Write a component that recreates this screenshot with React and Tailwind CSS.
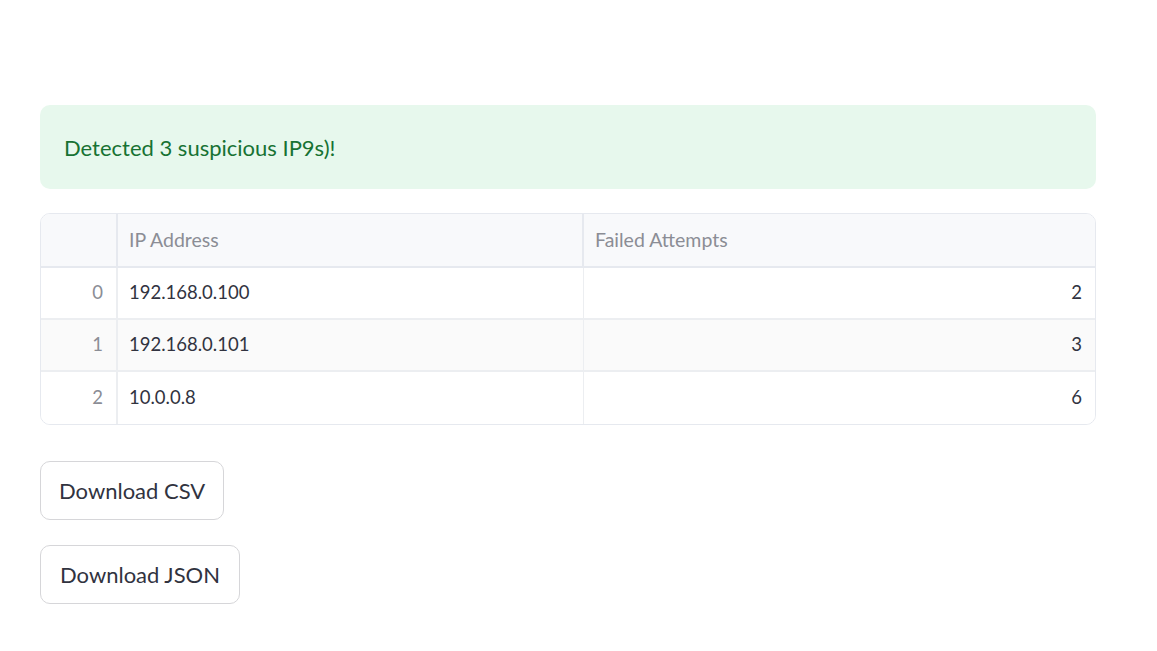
const rows = [
  { idx: 0, ip: "192.168.0.100", attempts: 2 },
  { idx: 1, ip: "192.168.0.101", attempts: 3 },
  { idx: 2, ip: "10.0.0.8", attempts: 6 },
];

function ResultsTable() {
  return (
    <div className="border border-[#e6e9ef] rounded-[10px] overflow-hidden">
      <div className="grid grid-cols-[77px_466px_1fr] h-[54px] bg-[#f8f9fb] text-[19.5px] text-[#8b8d95] border-b-2 border-[#e6e9ef]">
        <div className="border-r-2 border-[#e6e9ef]" />
        <div className="flex items-center px-[11px] border-r-2 border-[#e6e9ef]">IP Address</div>
        <div className="flex items-center px-[11px]">Failed Attempts</div>
      </div>
      {rows.map((row, i) => (
        <div
          key={row.idx}
          className={`grid grid-cols-[77px_466px_1fr] h-[52px] text-[18.5px] text-[#31333f] ${
            i === 1 ? "bg-[#fafafa]" : "bg-white"
          } ${i < rows.length - 1 ? "border-b-2 border-[#eceef1]" : ""}`}
        >
          <div className="flex items-center justify-end px-[13px] text-[#8b8d95] border-r-2 border-[#eceef1]">
            {row.idx}
          </div>
          <div className="flex items-center px-[11px] border-r border-[#eceef1]">{row.ip}</div>
          <div className="flex items-center justify-end px-[13px]">{row.attempts}</div>
        </div>
      ))}
    </div>
  );
}

export default function App() {
  return (
    <div className="min-h-screen bg-white font-['Lato',sans-serif] text-[#31333f] pt-[105px] pl-[40px] pr-[61px]">
      <div className="flex items-center h-[84px] rounded-[10px] bg-[#e7f8ed] px-[24px] text-[22px] text-[#177233]">
        Detected 3 suspicious IP9s)!
      </div>
      <div className="mt-[24px]">
        <ResultsTable />
      </div>
      <div className="flex flex-col items-start gap-[25px] mt-[36px]">
        <button className="h-[59px] px-[18px] border border-[#d6d6d9] rounded-[10px] bg-white text-[22px] text-[#31333f]">
          Download CSV
        </button>
        <button className="h-[59px] px-[19px] border border-[#d6d6d9] rounded-[10px] bg-white text-[22px] text-[#31333f]">
          Download JSON
        </button>
      </div>
    </div>
  );
}
